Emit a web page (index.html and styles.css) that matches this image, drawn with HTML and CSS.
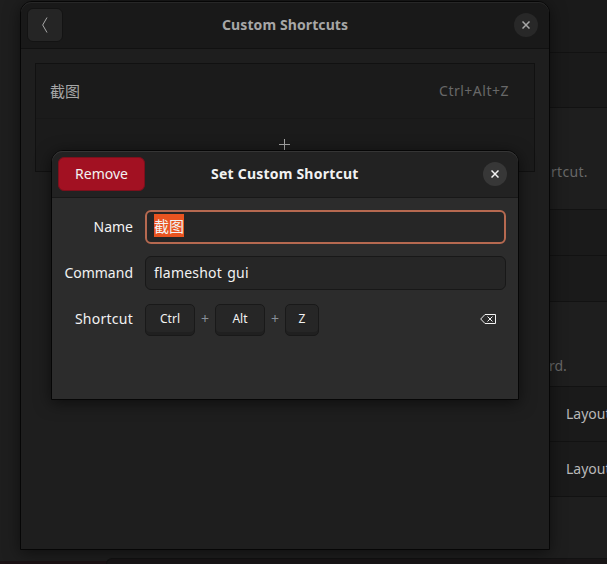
FILE: index.html
```html
<!DOCTYPE html>
<html lang="en">
<head>
<meta charset="utf-8">
<title>Set Custom Shortcut</title>
<link rel="stylesheet" href="styles.css">
</head>
<body>
<div class="desktop">
  <div class="settings">
    <div class="row r1"></div>
    <div class="row r2"></div>
    <div class="gap g1"><span class="t-rtcut">rtcut.</span></div>
    <div class="row r3"></div>
    <div class="row r4"></div>
    <div class="gap g2"><span class="t-rd">rd.</span></div>
    <div class="row r5"><span class="t-layout">Layout</span></div>
    <div class="row r6"><span class="t-layout">Layout</span></div>
    <div class="gap g3"></div>
  </div>
  <div class="edge"><div class="panel"></div></div>

  <section class="window parent">
    <header class="bar">
      <button class="back"><svg width="8" height="18" viewBox="0 0 8 18"><path d="M6 1.500 1.700 9 6 16.500"/></svg></button>
      <h1><span class="t-title">Custom Shortcuts</span></h1>
      <button class="close"><svg width="8" height="8" viewBox="0 0 8 8"><path d="M.5.5l7 7M7.500.5l-7 7"/></svg></button>
    </header>
    <div class="list">
      <div class="item"><span class="cjk">截图</span><span class="accel">Ctrl+Alt+Z</span></div>
      <div class="item add"><svg width="11" height="11" viewBox="0 0 11 11"><path d="M5.500 0v11M0 5.500h11"/></svg></div>
    </div>
  </section>

  <section class="window dialog">
    <header class="bar">
      <button class="remove"><span>Remove</span></button>
      <h1><span class="t-title2">Set Custom Shortcut</span></h1>
      <button class="close"><svg width="8" height="8" viewBox="0 0 8 8"><path d="M.5.5l7 7M7.500.5l-7 7"/></svg></button>
    </header>
    <div class="form">
      <label class="l-name">Name</label>
      <div class="field focus"><span class="sel">截图</span></div>
      <label class="l-command">Command</label>
      <div class="field"><span class="cmd">flameshot gui</span></div>
      <label class="l-shortcut">Shortcut</label>
      <div class="keys">
        <kbd class="k1">Ctrl</kbd><i>+</i><kbd class="k2">Alt</kbd><i>+</i><kbd class="k3">Z</kbd>
        <svg class="erase" width="16" height="10" viewBox="0 0 16 10"><path d="M5 .5h10.500v9H5L.7 5z"/><path d="M7.500 2.500l5 5M12.500 2.500l-5 5"/></svg>
      </div>
    </div>
  </section>
</div>
</body>
</html>
```
FILE: styles.css
```css
* { box-sizing: border-box; }
body { margin: 0; font: 14px/20px "Noto Sans", "Noto Sans CJK SC", sans-serif; color: #f2f2f2; }
button { padding: 0; font: inherit; color: inherit; }
svg { display: block; fill: none; stroke: currentColor; }
span, label { white-space: nowrap; }

.desktop { position: relative; display: flex; flex-direction: column; width: 607px; height: 564px; overflow: hidden; background: #1e1e1e; }
.settings { flex: none; height: 560px; padding-left: 108px; overflow: hidden; }
.row, .gap { display: flex; align-items: center; border-bottom: 1px solid #121212; overflow: hidden; }
.row { background: #1a1a1a; }
.gap { background: #1e1e1e; color: #686868; }
.r1 { height: 53px; }
.r2 { height: 55px; }
.g1 { height: 102px; padding: 26px 0 0 443px; }
.r3 { height: 46px; }
.r4 { height: 46px; }
.g2 { height: 85px; padding: 44px 0 0 441px; }
.r5, .r6 { height: 55px; padding-left: 458px; color: #b8b8b8; }
.g3 { height: 62px; border: 0; }
.t-rtcut { letter-spacing: .3px; }
.edge { position: absolute; left: 0; right: 0; bottom: 0; height: 6px; background: linear-gradient(transparent 3px, #1b1215 3px); }
.panel { height: 6px; margin-left: 106px; border: 1px solid #121212; border-width: 1px 0 0 1px; border-radius: 6px 0 0; background: #181516; }

.window { position: absolute; border: 1px solid #060606; border-radius: 12px 12px 0 0; }
.parent { left: 20px; top: 1px; width: 530px; height: 549px; background: #1e1e1e; color: #a7a7a7; box-shadow: 0 3px 16px #00000080; }
.dialog { left: 51px; top: 150px; width: 468px; height: 250px; background: #2c2c2c; box-shadow: 0 3px 16px #00000090; }
.bar { display: grid; align-items: center; height: 47px; padding: 0 11px 0 6px; border-bottom: 1px solid #111; border-radius: 11px 11px 0 0; background: #191919; box-shadow: inset 0 1px #272727; }
.parent .bar { grid-template-columns: 36px 1fr 24px; }
.dialog .bar { grid-template-columns: 87px 1fr 24px; background: #222; border-color: #181818; box-shadow: inset 0 1px #353535; }
.bar h1 { margin: 0; font-size: 14px; font-weight: 700; line-height: 20px; }
.parent h1 { padding-left: 159px; letter-spacing: .1px; }
.dialog h1 { padding-left: 66px; letter-spacing: .22px; }
.back { display: grid; place-items: center; width: 36px; height: 34px; border: 1px solid #131313; border-radius: 6px; background: #252525; }
.close { display: grid; place-items: center; width: 24px; height: 24px; border: 0; border-radius: 50%; background: #282828; }
.close svg { stroke-width: 1.5; }
.dialog .close { background: #373737; }
.remove { width: 87px; height: 34px; border: 1px solid #7b101c; border-radius: 6px; background: #a21122; }

.list { margin: 14px 14px 0; border: 1px solid #111; background: #1b1b1b; }
.item { display: flex; align-items: center; justify-content: space-between; height: 55px; padding: 0 25px 0 14px; border-bottom: 1px solid #181818; }
.item .cjk { font-size: 15px; }
.accel { color: #686868; letter-spacing: .5px; }
.item.add { height: 52px; border: 0; justify-content: center; padding: 0 2px 2px 0; }

.form { display: grid; grid-template-columns: 81px 361px; grid-auto-rows: 34px; gap: 12px; padding-top: 12px; align-items: center; }
.form label { justify-self: end; }
.l-shortcut { letter-spacing: .25px; }
.field { display: flex; align-items: center; height: 34px; padding-left: 8px; border: 1px solid #181818; border-radius: 6px; background: #262626; }
.field.focus { padding-left: 7px; border: 2px solid #b66950; }
.cmd { letter-spacing: .2px; word-spacing: 1.5px; }
.sel { height: 23px; font-size: 15px; line-height: 25px; background: #e95420; margin-bottom: 3px; }
.keys { display: flex; align-items: center; height: 34px; padding-top: 1px; }
kbd { height: 32px; border: 1px solid #191919; border-radius: 5px; background: #262626; box-shadow: inset 0 -3px #202020; font: 12px/28px "Noto Sans", sans-serif; text-align: center; }
.k1, .k2 { width: 50px; }
.k3 { width: 34px; }
.keys i { width: 20px; font-style: normal; text-align: center; color: #888f99; font-size: 14px; line-height: 18px; padding-bottom: 1px; }
.erase { margin: 0 10px 1px auto; }
```
